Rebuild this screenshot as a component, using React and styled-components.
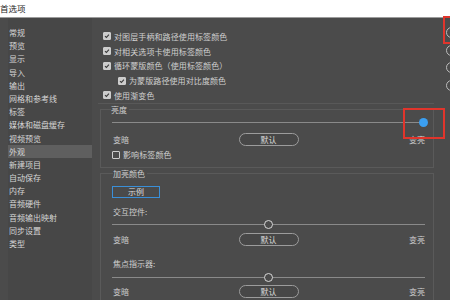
import React from "react";
import styled, { createGlobalStyle } from "styled-components";

const Global = createGlobalStyle`
  html, body { margin: 0; padding: 0; background: #4b4b4b; overflow: hidden; }
  * { box-sizing: border-box; }
  body { font-family: "Noto Sans CJK SC", "Noto Sans", sans-serif; }
`;

const Window = styled.div`
  width: 450px;
  height: 300px;
  display: flex;
  flex-direction: column;
  overflow: hidden;
  position: relative;
  font-family: "Noto Sans CJK SC", "Noto Sans", sans-serif;
  font-size: 8px;
  color: #cfcfcf;
`;

const TitleBar = styled.div`
  height: 18px;
  flex: none;
  background: #ffffff;
  border-bottom: 1px solid #9c9c9c;
  color: #1e1e1e;
  font-size: 8.5px;
  line-height: 17px;
  padding-left: 0;
`;

const Body = styled.div`
  flex: 1;
  display: flex;
  background: #4b4b4b;
  min-height: 0;
`;

const Sidebar = styled.ul`
  list-style: none;
  margin: 0 0 0 8px;
  padding: 8px 0 0 0;
  width: 84px;
  flex: none;
  background: #474747;
`;

const NavItem = styled.li`
  height: 13.2px;
  line-height: 13.2px;
  padding-left: 1px;
  white-space: nowrap;
  color: #d6d6d6;
  background: ${(p) => (p.$active ? "#5f5f5f" : "transparent")};
`;

const Main = styled.div`
  width: 352px;
  flex: none;
  padding-top: 11px;
`;

const CheckList = styled.div`
  padding-left: 11px;
`;

const CheckRow = styled.label`
  display: flex;
  align-items: center;
  gap: 2px;
  height: ${(p) => p.$h || 14.75}px;
  padding-left: ${(p) => (p.$indent ? 15 : 0)}px;
  white-space: nowrap;
  color: #d0d0d0;
  letter-spacing: 0.1px;
`;

const Box = styled.span`
  width: 8px;
  height: 8px;
  flex: none;
  border-radius: 1px;
  display: inline-flex;
  align-items: center;
  justify-content: center;
  background: ${(p) => (p.$checked ? "#cdcdcd" : "transparent")};
  border: 1px solid #cdcdcd;
  margin-right: 1px;
`;

const Check = ({ checked }) => (
  <Box $checked={checked}>
    {checked && (
      <svg width="8" height="8" viewBox="0 0 8 8">
        <path d="M1.3 4.1 L3.2 5.9 L6.6 2.1" fill="none" stroke="#3a3a3a" strokeWidth="1.4" />
      </svg>
    )}
  </Box>
);

const Separator = styled.div`
  height: 1px;
  margin: 0 0 0 6px;
  width: 336px;
  background: #585858;
`;

const Group = styled.fieldset`
  margin: ${(p) => p.$mt || 0}px 0 0 8px;
  width: 334px;
  min-width: 0;
  border: 1px solid #5a5a5a;
  padding: 0 8px ${(p) => p.$pb || 0}px 11px;
  min-height: ${(p) => p.$minH || 0}px;
`;

const Legend = styled.legend`
  font-size: 8px;
  line-height: 12px;
  height: 12px;
  padding: 0 2px 0 0;
  margin-left: ${(p) => p.$ml || -1}px;
  color: #cfcfcf;
`;

const SliderBox = styled.div`
  position: relative;
  height: 10px;
  margin-top: ${(p) => p.$mt || 0}px;
  display: flex;
  align-items: center;
`;

const Track = styled.div`
  height: 1px;
  width: 100%;
  background: #8a8a8a;
`;

const Thumb = styled.div`
  position: absolute;
  top: 50%;
  width: 9px;
  height: 9px;
  margin-left: -4.5px;
  margin-top: -4.5px;
  border-radius: 50%;
  background: ${(p) => (p.$filled ? "#3b9ff1" : "#4b4b4b")};
  border: ${(p) => (p.$filled ? "none" : "1.3px solid #d8d8d8")};
`;

const Slider = ({ value, filled, mt }) => (
  <SliderBox $mt={mt}>
    <Track />
    <Thumb $filled={filled} style={{ left: `${value}%` }} />
  </SliderBox>
);

const RangeRow = styled.div`
  display: grid;
  grid-template-columns: 1fr 60px 1fr;
  align-items: center;
  height: 13px;
  margin-top: ${(p) => p.$mt || 0}px;
`;

const Side = styled.span`
  justify-self: ${(p) => (p.$right ? "end" : "start")};
  padding-left: ${(p) => (p.$right ? 0 : 1)}px;
  color: #cfcfcf;
  white-space: nowrap;
`;

const Pill = styled.button`
  width: 60px;
  height: 13px;
  border: 1px solid #9c9c9c;
  border-radius: 7px;
  background: #474747;
  color: #dcdcdc;
  font-family: inherit;
  font-size: 8px;
  line-height: 11px;
  padding: 0;
  text-align: center;
`;

const Range = ({ mt }) => (
  <RangeRow $mt={mt}>
    <Side>变暗</Side>
    <Pill>默认</Pill>
    <Side $right>变亮</Side>
  </RangeRow>
);

const SampleButton = styled.button`
  display: block;
  width: 48px;
  height: 12px;
  margin-top: 6px;
  border: 1px solid #3a8fd8;
  background: #4a4a4a;
  color: #dcdcdc;
  font-family: inherit;
  font-size: 8px;
  line-height: 10px;
  padding: 0;
  text-align: center;
`;

const FieldLabel = styled.div`
  height: 12px;
  line-height: 12px;
  margin-top: ${(p) => p.$mt || 0}px;
  padding-left: 1px;
  color: #cfcfcf;
`;

const RightStrip = styled.div`
  flex: none;
  width: 20px;
  padding: 9px 0 0 2px;
  display: flex;
  flex-direction: column;
  gap: 6.7px;
`;

const Radio = styled.span`
  width: 11px;
  height: 11px;
  border-radius: 50%;
  border: 1px solid #bcbcbc;
  flex: none;
`;

const Mark = styled.div`
  position: absolute;
  border: 2px solid #e0352c;
  pointer-events: none;
`;

const nav = [
  "常规", "预览", "显示", "导入", "输出", "网格和参考线", "标签", "媒体和磁盘缓存",
  "视频预览", "外观", "新建项目", "自动保存", "内存", "音频硬件", "音频输出映射", "同步设置", "类型",
];

export default function App() {
  return (
    <>
      <Global />
      <Window>
        <TitleBar>首选项</TitleBar>
        <Body>
          <Sidebar>
            {nav.map((n) => (
              <NavItem key={n} $active={n === "外观"}>{n}</NavItem>
            ))}
          </Sidebar>
          <Main>
            <CheckList>
              <CheckRow><Check checked />对图层手柄和路径使用标签颜色</CheckRow>
              <CheckRow><Check checked />对相关选项卡使用标签颜色</CheckRow>
              <CheckRow><Check checked />循环蒙版颜色（使用标签颜色）</CheckRow>
              <CheckRow $indent><Check checked />为蒙版路径使用对比度颜色</CheckRow>
              <CheckRow><Check checked />使用渐变色</CheckRow>
            </CheckList>
            <Separator />
            <Group $pb={5}>
              <Legend>亮度</Legend>
              <Slider value={99.4} filled mt={2} />
              <Range mt={5} />
              <CheckRow $h={14} style={{ marginTop: 2 }}><Check />影响标签颜色</CheckRow>
            </Group>
            <Group $minH={140}>
              <Legend $ml={1}>加亮颜色</Legend>
              <SampleButton>示例</SampleButton>
              <FieldLabel $mt={8}>交互控件:</FieldLabel>
              <Slider value={50} mt={2} />
              <Range mt={3} />
              <FieldLabel $mt={12}>焦点指示器:</FieldLabel>
              <Slider value={50} mt={3} />
              <Range mt={2} />
            </Group>
          </Main>
          <RightStrip>
            <Radio />
            <Radio />
            <Radio />
            <Radio />
          </RightStrip>
        </Body>
        <Mark style={{ left: 443, top: 16, width: 12, height: 28 }} />
        <Mark style={{ left: 403, top: 108, width: 42, height: 31 }} />
      </Window>
    </>
  );
}
